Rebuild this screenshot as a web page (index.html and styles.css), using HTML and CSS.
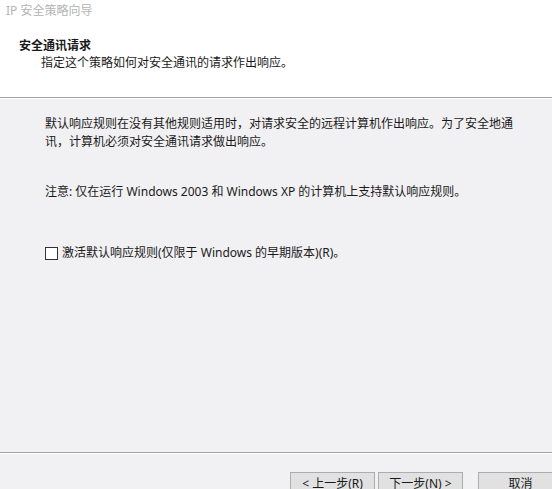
FILE: index.html
```html
<!DOCTYPE html>
<html lang="zh-CN">
<head>
<meta charset="utf-8">
<title>IP 安全策略向导</title>
<link rel="stylesheet" href="styles.css">
</head>
<body>
<div class="window">
  <div class="header">
    <div class="app-title">IP 安全策略向导</div>
    <div class="heading">安全通讯请求</div>
    <div class="subtitle">指定这个策略如何对安全通讯的请求作出响应。</div>
  </div>
  <div class="content">
    <p class="para">默认响应规则在没有其他规则适用时，对请求安全的远程计算机作出响应。为了安全地通讯，计算机必须对安全通讯请求做出响应。</p>
    <p class="note">注意: 仅在运行 Windows 2003 和 Windows XP 的计算机上支持默认响应规则。</p>
    <label class="check-row"><span class="checkbox"></span><span class="check-label">激活默认响应规则(仅限于 Windows 的早期版本)(R)。</span></label>
  </div>
  <div class="footer">
    <div class="btn-group">
      <button class="btn">&lt; 上一步(R)</button>
      <button class="btn">下一步(N) &gt;</button>
    </div>
    <button class="btn btn-cancel">取消</button>
  </div>
</div>
</body>
</html>
```
FILE: styles.css
```css
html, body {
  margin: 0;
  padding: 0;
}
body {
  background: #f1f0f2;
  font-family: "Noto Sans", "Noto Sans CJK SC", sans-serif;
  font-size: 12px;
  color: #1a1a1a;
}
.window {
  width: 552px;
  height: 489px;
  overflow: hidden;
  display: flex;
  flex-direction: column;
}
.header {
  background: #ffffff;
  border-bottom: 1px solid #a3a3a3;
  box-shadow: 0 1px 0 #ffffff;
  box-sizing: border-box;
  height: 98px;
  padding-top: 3px;
  flex-shrink: 0;
}
.app-title {
  color: #b4b4b4;
  line-height: 16px;
  padding-left: 6px;
}
.heading {
  font-weight: bold;
  line-height: 16px;
  padding-left: 19px;
  margin-top: 19px;
}
.subtitle {
  line-height: 16px;
  padding-left: 41px;
  margin-top: 1px;
}
.content {
  height: 353px;
  flex-shrink: 0;
  box-sizing: border-box;
  padding: 16px 0 0 45px;
  margin-top: 1px;
}
.para {
  margin: 0;
  width: 472px;
  line-height: 18px;
}
.note {
  margin: 32px 0 0;
  line-height: 18px;
}
.check-row {
  display: flex;
  align-items: center;
  margin-top: 43px;
  line-height: 18px;
}
.checkbox {
  width: 11px;
  height: 11px;
  border: 1px solid #333333;
  background: #ffffff;
  margin-right: 4px;
  flex-shrink: 0;
}
.footer {
  border-top: 1px solid #a3a3a3;
  box-shadow: inset 0 1px 0 #ffffff;
  flex: 1;
  min-height: 0;
  display: flex;
  align-items: flex-start;
  padding: 19px 0 0 290px;
  gap: 15px;
}
.btn-group {
  display: flex;
  gap: 3px;
}
.btn {
  width: 85px;
  height: 24px;
  background: #e1e1e1;
  border: 1px solid #adadad;
  font-family: "Noto Sans", "Noto Sans CJK SC", sans-serif;
  font-size: 12px;
  color: #1a1a1a;
  padding: 0;
  line-height: 20px;
  flex-shrink: 0;
}
```
